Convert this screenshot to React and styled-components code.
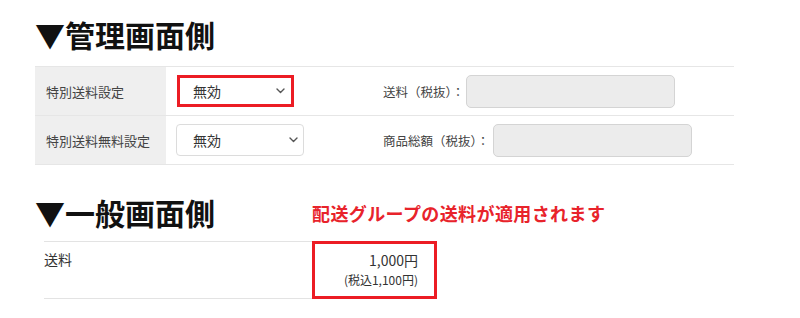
import styled, { createGlobalStyle } from "styled-components";

const GlobalStyle = createGlobalStyle`
  body {
    margin: 0;
    background: #fff;
    font-family: "Noto Sans CJK JP", "Noto Sans", sans-serif;
    color: #333;
  }
`;

const ChevronIcon = () => (
  <svg width="9" height="6" viewBox="0 0 9 6" fill="none">
    <path d="M1 1l3.5 3.5L8 1" stroke="#555" strokeWidth="1.4" strokeLinecap="round" strokeLinejoin="round" />
  </svg>
);

export default function App() {
  return (
    <Page>
      <GlobalStyle />
      <Heading>▼管理画面側</Heading>
      <SettingTable>
        <SettingRow>
          <LabelCell>特別送料設定</LabelCell>
          <ValueCell>
            <SelectSlot>
              <SelectBox $width={117} $highlight>
                <span>無効</span>
                <ChevronIcon />
              </SelectBox>
            </SelectSlot>
            <FeeLabel>送料（税抜）：</FeeLabel>
            <FeeInput $width={209} disabled />
          </ValueCell>
        </SettingRow>
        <SettingRow>
          <LabelCell>特別送料無料設定</LabelCell>
          <ValueCell>
            <SelectSlot>
              <SelectBox $width={128}>
                <span>無効</span>
                <ChevronIcon />
              </SelectBox>
            </SelectSlot>
            <FeeLabel $gap={4}>商品総額（税抜）：</FeeLabel>
            <FeeInput $width={199} disabled />
          </ValueCell>
        </SettingRow>
      </SettingTable>

      <HeadingRow>
        <Heading>▼一般画面側</Heading>
        <Note>配送グループの送料が適用されます</Note>
      </HeadingRow>
      <PriceTable>
        <PriceLabel>送料</PriceLabel>
        <PriceCell>
          <Price>1,000円</Price>
          <TaxPrice>(税込1,100円)</TaxPrice>
        </PriceCell>
      </PriceTable>
    </Page>
  );
}

const Page = styled.div`
  width: 800px;
  box-sizing: border-box;
  padding: 16px 0 0 35px;
`;

const Heading = styled.h2`
  margin: 0;
  font-size: 30px;
  line-height: 36px;
  font-weight: 700;
  color: #111;
`;

const SettingTable = styled.div`
  width: 699px;
  margin-top: 14px;
  border-top: 1px solid #e6e6e6;
`;

const SettingRow = styled.div`
  display: grid;
  grid-template-columns: 131px 1fr;
  height: 49px;
  box-sizing: border-box;
  border-bottom: 1px solid #e6e6e6;
`;

const LabelCell = styled.div`
  display: flex;
  align-items: center;
  padding-left: 11px;
  background: #efefef;
  font-size: 13px;
  color: #444;
`;

const ValueCell = styled.div`
  display: flex;
  align-items: center;
  padding-left: 10px;
`;

const SelectSlot = styled.div`
  width: 207px;
  display: flex;
  align-items: center;
`;

const SelectBox = styled.div`
  width: ${({ $width }) => $width}px;
  height: 32px;
  box-sizing: border-box;
  display: flex;
  align-items: center;
  justify-content: space-between;
  margin-left: ${({ $highlight }) => ($highlight ? "1px" : "0")};
  padding: 0 ${({ $highlight }) => ($highlight ? "6px 0 13px" : "5px 0 16px")};
  border: ${({ $highlight }) => ($highlight ? "3px solid #ec1c24" : "1px solid #dcdcdc")};
  border-radius: ${({ $highlight }) => ($highlight ? "0" : "4px")};
  background: #fff;
  font-size: 14px;
  color: #333;
`;

const FeeLabel = styled.span`
  font-size: 12.5px;
  color: #444;
  white-space: nowrap;
  margin-right: ${({ $gap = 2 }) => $gap}px;
`;

const FeeInput = styled.input`
  width: ${({ $width }) => $width}px;
  height: 33px;
  box-sizing: border-box;
  background: #ececec;
  border: 1px solid #d4d4d4;
  border-radius: 5px;
  padding: 0;
`;

const HeadingRow = styled.div`
  display: flex;
  align-items: center;
  gap: 97px;
  margin-top: 29px;
`;

const Note = styled.span`
  font-size: 18px;
  font-weight: 700;
  letter-spacing: 0.4px;
  color: #e8232b;
  margin-top: 1px;
`;

const PriceTable = styled.div`
  display: grid;
  grid-template-columns: 268px 125px;
  margin: 11px 0 0 9px;
  height: 58px;
`;

const PriceLabel = styled.div`
  border-top: 1px solid #e3e3e3;
  border-bottom: 1px solid #e3e3e3;
  padding-top: 7px;
  font-size: 14px;
  line-height: 20px;
  color: #333;
`;

const PriceCell = styled.div`
  box-sizing: border-box;
  border: 3px solid #ec1c24;
  padding: 6px 16px 0 0;
  text-align: right;
  color: #333;
`;

const Price = styled.div`
  font-size: 14px;
  line-height: 20px;
`;

const TaxPrice = styled.div`
  margin-top: 2px;
  font-size: 12px;
  line-height: 16px;
`;
